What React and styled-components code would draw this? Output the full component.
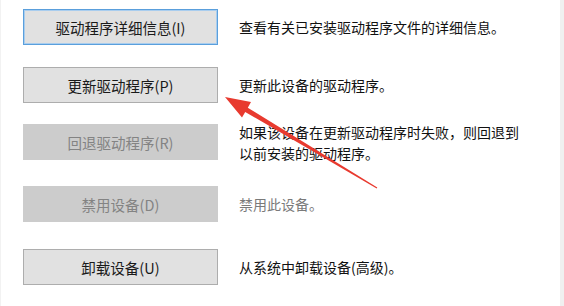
import styled, { createGlobalStyle } from "styled-components";

const GlobalStyle = createGlobalStyle`
  html, body {
    margin: 0;
    padding: 0;
    background: #ffffff;
  }
  body {
    font-family: "Microsoft YaHei", "Noto Sans CJK SC", "Noto Sans", sans-serif;
  }
`;

const Page = styled.div`
  position: relative;
  width: 564px;
  height: 306px;
  overflow: hidden;
  display: flex;
  background: #ffffff;
`;

const Panel = styled.div`
  flex: 1;
  padding: 9px 0 0 22px;
  border-left: 1px solid #f2f2f2;
`;

const Scroll = styled.div`
  width: 4px;
  background: #f0f0f0;
`;

const Row = styled.div`
  display: grid;
  grid-template-columns: 195px 1fr;
  grid-template-rows: 36px;
  column-gap: 21px;
  align-items: center;
  margin-top: ${(p) => p.$top || 0}px;
  height: 36px;
`;

const Button = styled.div`
  box-sizing: border-box;
  height: 36px;
  display: flex;
  align-items: center;
  justify-content: center;
  font-size: 14.5px;
  background: ${(p) => (p.$disabled ? "#cccccc" : "#e1e1e1")};
  color: ${(p) => (p.$disabled ? "#838383" : "#1a1a1a")};
  border: 1px solid
    ${(p) => (p.$focus ? "#5a9fdc" : p.$disabled ? "#cccccc" : "#adadad")};
  box-shadow: ${(p) => (p.$focus ? "inset 0 0 0 1px #a9cdee" : "none")};
`;

const Desc = styled.div`
  font-size: 14px;
  line-height: 21px;
  color: ${(p) => (p.$disabled ? "#7a7a7a" : "#111111")};
  align-self: ${(p) => (p.$two ? "start" : "center")};
  margin-top: ${(p) => (p.$two ? -2 : 0)}px;
`;

const Arrow = styled.svg`
  position: absolute;
  left: 0;
  top: 0;
  pointer-events: none;
`;

const rows = [
  { label: "驱动程序详细信息(I)", desc: "查看有关已安装驱动程序文件的详细信息。", focus: true, top: 0 },
  { label: "更新驱动程序(P)", desc: "更新此设备的驱动程序。", top: 22 },
  {
    label: "回退驱动程序(R)",
    desc: ["如果该设备在更新驱动程序时失败，则回退到", "以前安装的驱动程序。"],
    disabled: true,
    top: 21,
  },
  { label: "禁用设备(D)", desc: "禁用此设备。", disabled: true, descDisabled: true, top: 26 },
  { label: "卸载设备(U)", desc: "从系统中卸载设备(高级)。", top: 27 },
];

export default function App() {
  return (
    <Page>
      <GlobalStyle />
      <Panel>
        {rows.map((r) => {
          const two = Array.isArray(r.desc);
          return (
            <Row key={r.label} $top={r.top}>
              <Button $focus={r.focus} $disabled={r.disabled}>
                {r.label}
              </Button>
              <Desc $disabled={r.descDisabled} $two={two}>
                {two ? (
                  <>
                    {r.desc[0]}
                    <br />
                    {r.desc[1]}
                  </>
                ) : (
                  r.desc
                )}
              </Desc>
            </Row>
          );
        })}
      </Panel>
      <Scroll />
      <Arrow width="564" height="306" viewBox="0 0 564 306">
        <polygon
          points="225,97 251,102 247.8,107.8 377.3,187.6 376.7,188.4 245.2,112 242,117.6"
          fill="#e83a2f"
        />
      </Arrow>
    </Page>
  );
}
